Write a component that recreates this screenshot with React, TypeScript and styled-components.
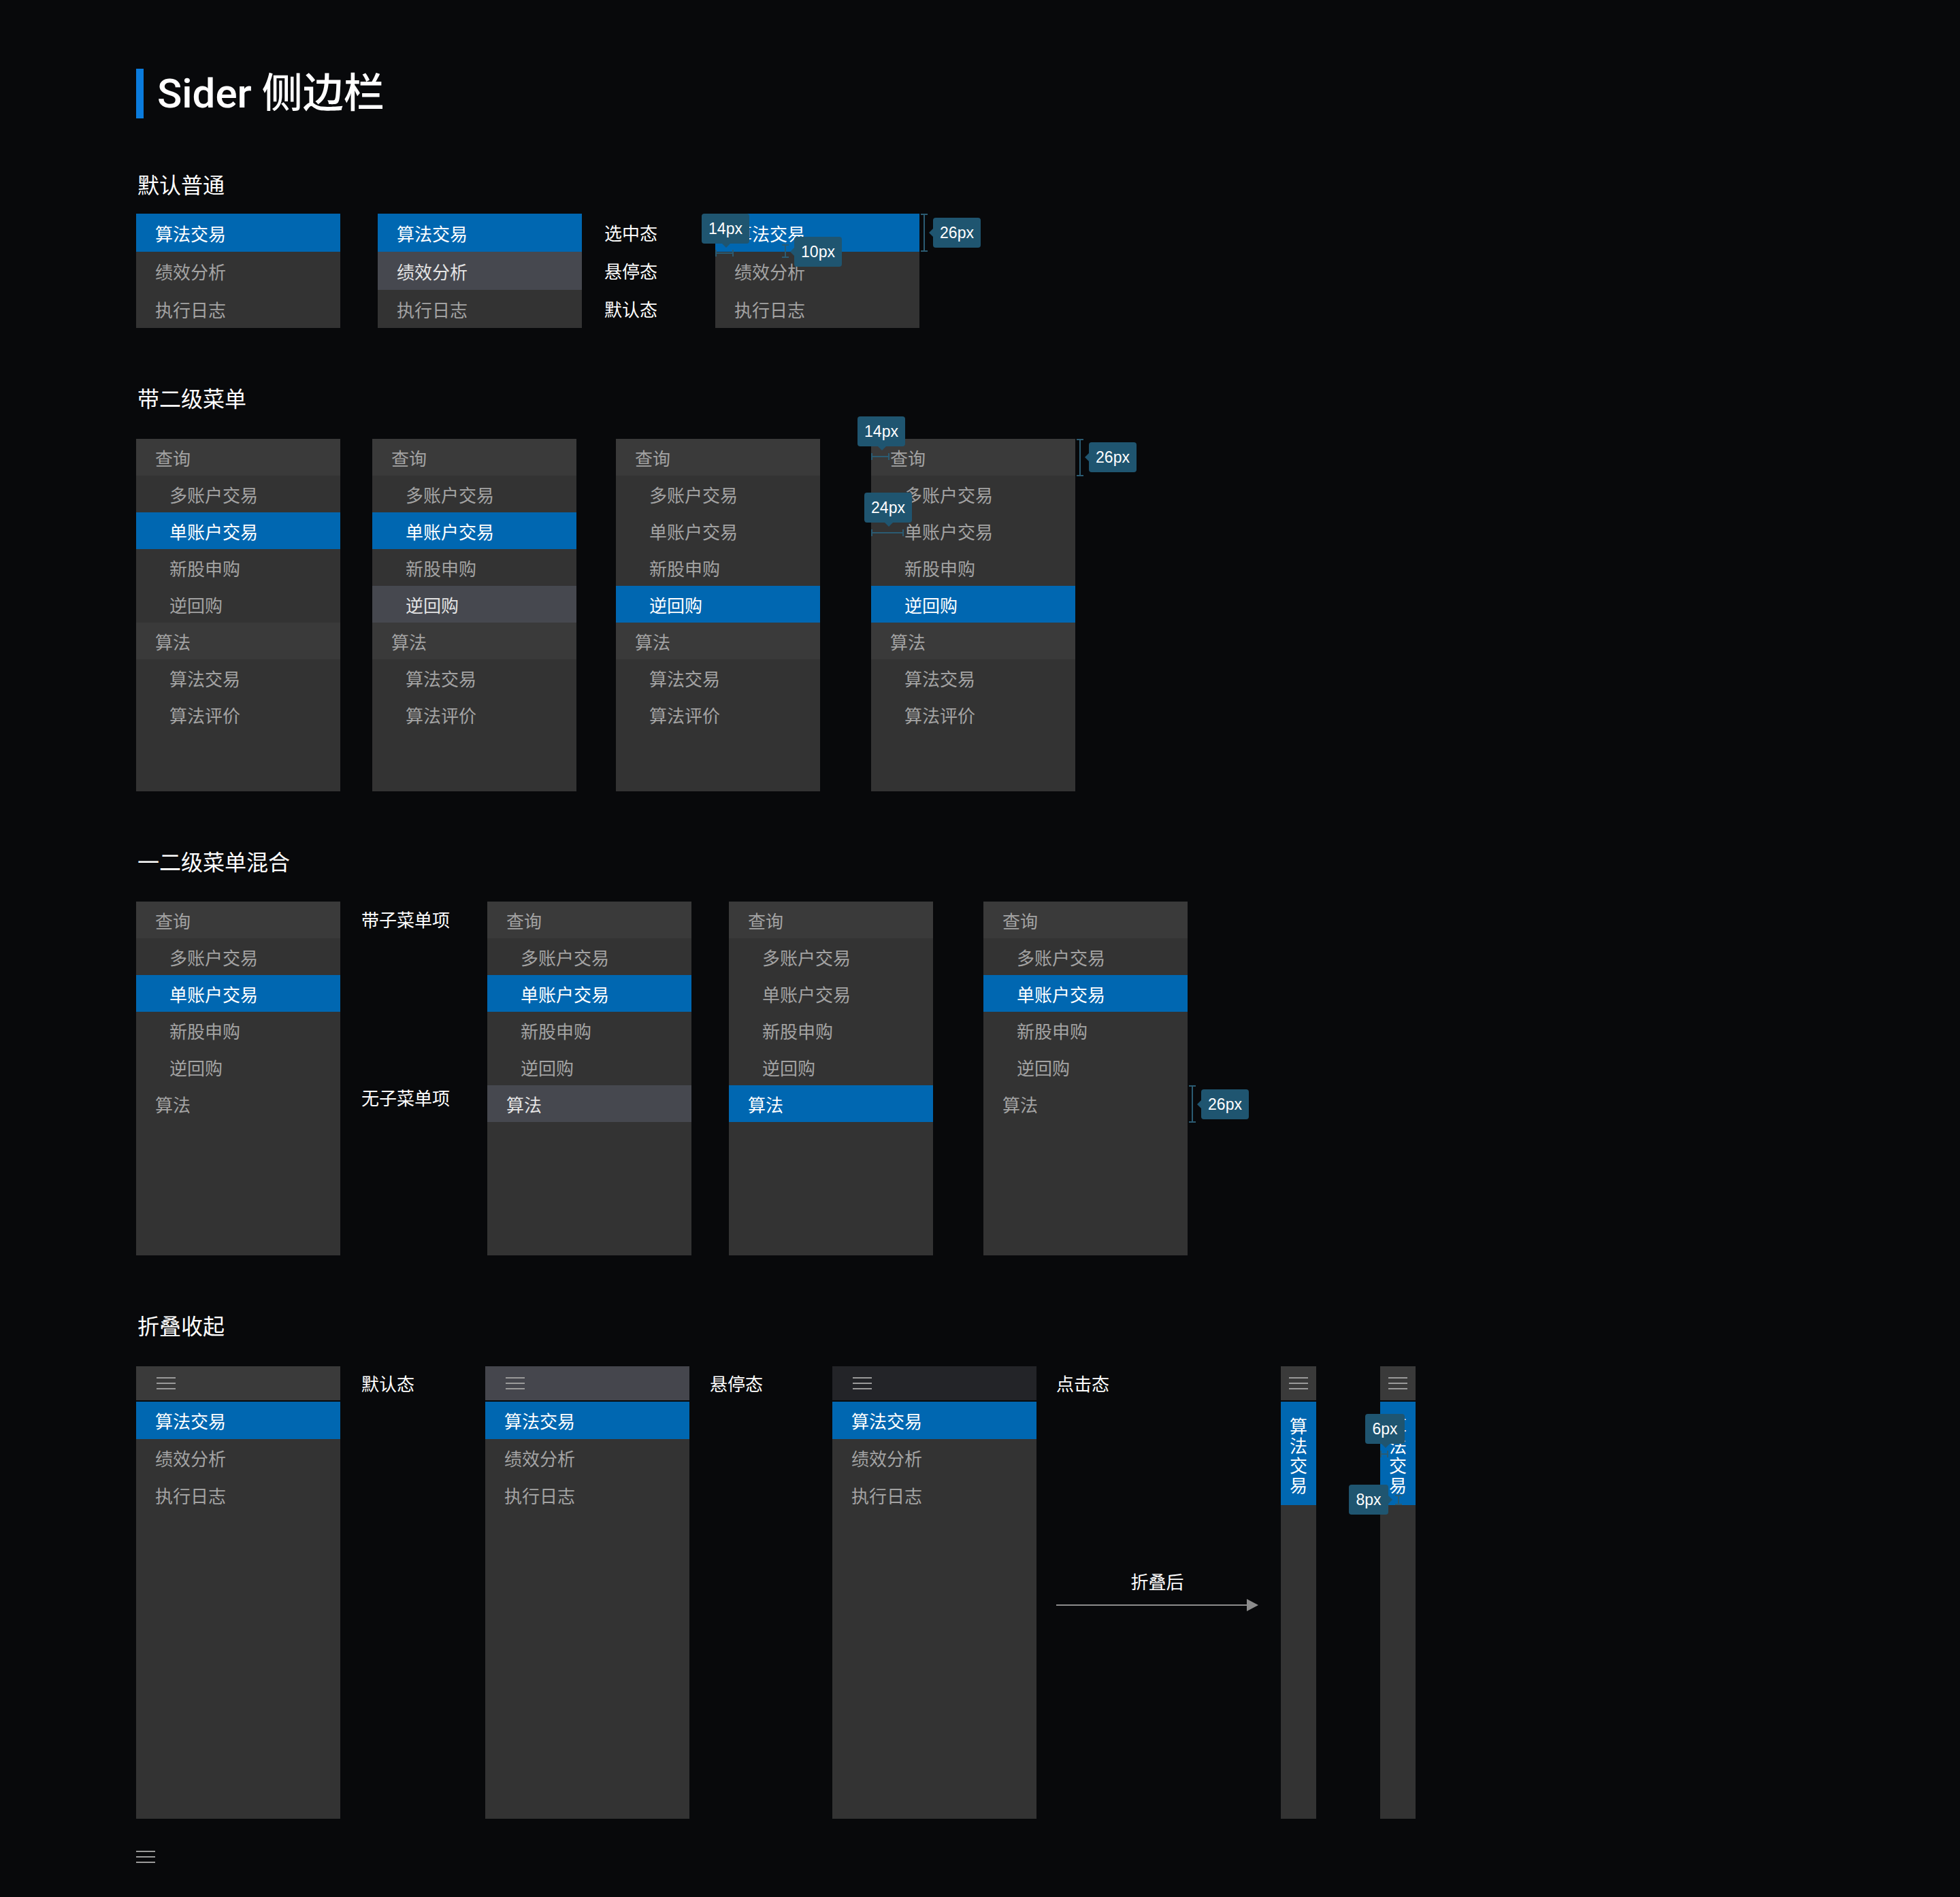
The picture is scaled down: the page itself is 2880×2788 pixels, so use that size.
import React from 'react';
import styled, { createGlobalStyle, css } from 'styled-components';

const C = {
  page: '#08090b',
  body: '#333333',
  group: '#3a3a3a',
  hover: '#46484f',
  active: '#0067b1',
  press: '#232428',
  text: '#a3a3a3',
  tip: '#1f5570',
  line: '#2b5b72',
};

const GlobalStyle = createGlobalStyle`
  html, body {
    margin: 0;
    padding: 0;
    background: ${C.page};
  }
  body {
    font-family: "Noto Sans CJK SC", "Noto Sans", sans-serif;
  }
`;

const Page = styled.div`
  width: 2880px;
  min-height: 2788px;
  box-sizing: border-box;
  padding: 101px 0 0 200px;
  background: ${C.page};
  color: #fff;
`;

const TitleRow = styled.div`
  display: flex;
  align-items: center;
  gap: 20px;
  height: 73px;
`;

const TitleBar = styled.div`
  width: 11px;
  height: 73px;
  background: #0a7bdc;
`;

const Title = styled.h1`
  margin: 0;
  font-family: Roboto, "Noto Sans CJK SC", sans-serif;
  font-size: 60px;
  line-height: 73px;
  font-weight: 500;
`;

const Section = styled.section<{ $top: number }>`
  margin-top: ${p => p.$top}px;
`;

const SectionTitle = styled.h2<{ $gap: number }>`
  margin: 0 0 ${p => p.$gap}px;
  padding-left: 2px;
  font-size: 32px;
  line-height: 44px;
  font-weight: 400;
`;

const Row = styled.div`
  display: flex;
  align-items: flex-start;
`;

const Sider = styled.div<{ $h: number; $ml?: number; $w?: number }>`
  position: relative;
  flex-shrink: 0;
  width: ${p => p.$w ?? 300}px;
  height: ${p => p.$h}px;
  margin-left: ${p => p.$ml ?? 0}px;
  background: ${C.body};
`;

type ItemState = 'default' | 'hover' | 'active';

const itemBg = (state: ItemState, group: boolean) => {
  if (state === 'active') return C.active;
  if (state === 'hover') return C.hover;
  return group ? C.group : 'transparent';
};

const itemColor = (state: ItemState) => {
  if (state === 'active') return '#ffffff';
  if (state === 'hover') return '#e4e4e4';
  return C.text;
};

const Item = styled.div<{ $h: number; $indent: number; $state: ItemState; $group: boolean }>`
  display: flex;
  align-items: center;
  height: ${p => p.$h}px;
  padding-left: ${p => p.$indent}px;
  font-size: 26px;
  white-space: nowrap;
  color: ${p => itemColor(p.$state)};
  background: ${p => itemBg(p.$state, p.$group)};
`;

const Header = styled.div<{ $state: 'default' | 'hover' | 'press'; $center?: boolean }>`
  display: flex;
  align-items: center;
  height: 50px;
  padding-left: 30px;
  border-bottom: 2px solid ${C.page};
  background: ${p => (p.$state === 'hover' ? '#45464d' : p.$state === 'press' ? C.press : C.group)};
  ${p =>
    p.$center &&
    css`
      justify-content: center;
      padding-left: 0;
    `}
`;

const VerticalActive = styled.div`
  display: flex;
  flex-direction: column;
  align-items: center;
  padding: 20px 0 16px;
  background: ${C.active};
  color: #fff;
  font-size: 26px;
  line-height: 29px;
`;

const LabelCol = styled.div<{ $w: number; $ml: number }>`
  display: flex;
  flex-direction: column;
  flex-shrink: 0;
  width: ${p => p.$w}px;
  margin-left: ${p => p.$ml}px;
`;

const StateLabel = styled.div<{ $lh: number; $mt?: number }>`
  margin-top: ${p => p.$mt ?? 0}px;
  font-size: 26px;
  line-height: ${p => p.$lh}px;
  font-weight: 400;
  white-space: nowrap;
`;

const ArrowBlock = styled.div`
  display: flex;
  flex-direction: column;
  align-items: center;
  gap: 8px;
  margin-top: 248px;
  font-size: 26px;
  line-height: 36px;
`;

const Footer = styled.div`
  margin-top: 46px;
  padding-bottom: 40px;
`;

type TipDir = 'down' | 'left' | 'right';

const Tip = styled.div<{ $x: number; $y: number; $w?: number; $dir: TipDir; $ax?: number }>`
  position: absolute;
  z-index: 3;
  left: ${p => p.$x}px;
  top: ${p => p.$y}px;
  width: ${p => p.$w ?? 70}px;
  height: 44px;
  border-radius: 4px;
  background: ${C.tip};
  color: #fff;
  font-family: "Liberation Sans", Arial, sans-serif;
  font-size: 23px;
  line-height: 44px;
  text-align: center;
  &::after {
    content: '';
    position: absolute;
    border: 6px solid transparent;
    ${p =>
      p.$dir === 'down'
        ? css`
            top: 100%;
            left: ${(p.$ax ?? 35) - 6}px;
            border-top-color: ${C.tip};
          `
        : p.$dir === 'left'
        ? css`
            right: 100%;
            top: 16px;
            border-right-color: ${C.tip};
          `
        : css`
            left: 100%;
            top: 16px;
            border-left-color: ${C.tip};
          `}
  }
`;

const HMeasure = styled.div<{ $x: number; $y: number; $len: number }>`
  position: absolute;
  z-index: 2;
  left: ${p => p.$x}px;
  top: ${p => p.$y - 1}px;
  width: ${p => p.$len}px;
  height: 2px;
  background: ${C.line};
  &::before,
  &::after {
    content: '';
    position: absolute;
    top: -4px;
    width: 2px;
    height: 10px;
    background: ${C.line};
  }
  &::before {
    left: 0;
  }
  &::after {
    right: 0;
  }
`;

const VMeasure = styled.div<{ $x: number; $y: number; $len: number }>`
  position: absolute;
  z-index: 2;
  left: ${p => p.$x - 1}px;
  top: ${p => p.$y}px;
  width: 2px;
  height: ${p => p.$len}px;
  background: ${C.line};
  &::before,
  &::after {
    content: '';
    position: absolute;
    left: -4px;
    width: 10px;
    height: 2px;
    background: ${C.line};
  }
  &::before {
    top: 0;
  }
  &::after {
    bottom: 0;
  }
`;

const Hamburger: React.FC = () => (
  <svg width="28" height="18" viewBox="0 0 28 18">
    <g stroke="#9a9a9a" strokeWidth="2">
      <line x1="0" y1="1" x2="28" y2="1" />
      <line x1="0" y1="9" x2="28" y2="9" />
      <line x1="0" y1="17" x2="28" y2="17" />
    </g>
  </svg>
);

const Arrow: React.FC = () => (
  <svg width="297" height="18" viewBox="0 0 297 18">
    <line x1="0" y1="9" x2="282" y2="9" stroke="#8c8c8c" strokeWidth="2" />
    <polygon points="280,0 297,9 280,18" fill="#8c8c8c" />
  </svg>
);

type MenuEntry = { label: string; level?: 1 | 2; state?: ItemState; group?: boolean };

const MenuList: React.FC<{ items: MenuEntry[]; rowH: number }> = ({ items, rowH }) => (
  <>
    {items.map((it, i) => (
      <Item
        key={i}
        $h={rowH}
        $indent={it.level === 2 ? 49 : 28}
        $state={it.state ?? 'default'}
        $group={!!it.group}
      >
        {it.label}
      </Item>
    ))}
  </>
);

const simple = (sel: number, hover = -1): MenuEntry[] =>
  ['算法交易', '绩效分析', '执行日志'].map((label, i) => ({
    label,
    state: i === sel ? 'active' : i === hover ? 'hover' : 'default',
  }));

const nested = (sel: number, hover = -1): MenuEntry[] => {
  const rows: MenuEntry[] = [
    { label: '查询', group: true },
    { label: '多账户交易', level: 2 },
    { label: '单账户交易', level: 2 },
    { label: '新股申购', level: 2 },
    { label: '逆回购', level: 2 },
    { label: '算法', group: true },
    { label: '算法交易', level: 2 },
    { label: '算法评价', level: 2 },
  ];
  return rows.map((r, i) => ({ ...r, state: i === sel ? 'active' : i === hover ? 'hover' : 'default' }));
};

const mixed = (sel: number[], hover = -1): MenuEntry[] => {
  const rows: MenuEntry[] = [
    { label: '查询', group: true },
    { label: '多账户交易', level: 2 },
    { label: '单账户交易', level: 2 },
    { label: '新股申购', level: 2 },
    { label: '逆回购', level: 2 },
    { label: '算法' },
  ];
  return rows.map((r, i) => ({
    ...r,
    state: sel.includes(i) ? 'active' : i === hover ? 'hover' : 'default',
  }));
};

const Collapsible: React.FC<{ ml: number; header: 'default' | 'hover' | 'press' }> = ({ ml, header }) => (
  <Sider $h={665} $ml={ml}>
    <Header $state={header}>
      <Hamburger />
    </Header>
    <MenuList items={simple(0)} rowH={55} />
  </Sider>
);

const Collapsed: React.FC<{ ml: number; children?: React.ReactNode }> = ({ ml, children }) => (
  <Sider $h={665} $w={52} $ml={ml}>
    <Header $state="default" $center>
      <Hamburger />
    </Header>
    <VerticalActive>
      {'算法交易'.split('').map(ch => (
        <span key={ch}>{ch}</span>
      ))}
    </VerticalActive>
    {children}
  </Sider>
);

const App: React.FC = () => (
  <Page>
    <GlobalStyle />
    <TitleRow>
      <TitleBar />
      <Title>Sider 侧边栏</Title>
    </TitleRow>

    <Section $top={74}>
      <SectionTitle $gap={22}>默认普通</SectionTitle>
      <Row>
        <Sider $h={168}>
          <MenuList items={simple(0)} rowH={56} />
        </Sider>
        <Sider $h={168} $ml={55}>
          <MenuList items={simple(0, 1)} rowH={56} />
        </Sider>
        <LabelCol $w={80} $ml={33}>
          <StateLabel $lh={56}>选中态</StateLabel>
          <StateLabel $lh={56}>悬停态</StateLabel>
          <StateLabel $lh={56}>默认态</StateLabel>
        </LabelCol>
        <Sider $h={168} $ml={83}>
          <MenuList items={simple(0)} rowH={56} />
          <Tip $x={-20} $y={0} $dir="down" $ax={36}>14px</Tip>
          <HMeasure $x={0} $y={58} $len={27} />
          <Tip $x={116} $y={34} $dir="left">10px</Tip>
          <VMeasure $x={103} $y={45} $len={20} />
          <VMeasure $x={307} $y={0} $len={56} />
          <Tip $x={320} $y={6} $dir="left">26px</Tip>
        </Sider>
      </Row>
    </Section>

    <Section $top={80}>
      <SectionTitle $gap={39}>带二级菜单</SectionTitle>
      <Row>
        <Sider $h={518}>
          <MenuList items={nested(2)} rowH={54} />
        </Sider>
        <Sider $h={518} $ml={47}>
          <MenuList items={nested(2, 4)} rowH={54} />
        </Sider>
        <Sider $h={518} $ml={58}>
          <MenuList items={nested(4)} rowH={54} />
        </Sider>
        <Sider $h={518} $ml={75}>
          <MenuList items={nested(4)} rowH={54} />
          <Tip $x={-20} $y={-33} $dir="down" $ax={36}>14px</Tip>
          <HMeasure $x={0} $y={26} $len={27} />
          <Tip $x={-10} $y={79} $dir="down" $ax={36}>24px</Tip>
          <HMeasure $x={0} $y={138} $len={48} />
          <VMeasure $x={307} $y={0} $len={55} />
          <Tip $x={320} $y={5} $dir="left">26px</Tip>
        </Sider>
      </Row>
    </Section>

    <Section $top={80}>
      <SectionTitle $gap={38}>一二级菜单混合</SectionTitle>
      <Row>
        <Sider $h={520}>
          <MenuList items={mixed([2])} rowH={54} />
        </Sider>
        <LabelCol $w={130} $ml={31}>
          <StateLabel $lh={52}>带子菜单项</StateLabel>
          <StateLabel $lh={52} $mt={210}>无子菜单项</StateLabel>
        </LabelCol>
        <Sider $h={520} $ml={55}>
          <MenuList items={mixed([2], 5)} rowH={54} />
        </Sider>
        <Sider $h={520} $ml={55}>
          <MenuList items={mixed([5])} rowH={54} />
        </Sider>
        <Sider $h={520} $ml={74}>
          <MenuList items={mixed([2])} rowH={54} />
          <VMeasure $x={307} $y={270} $len={55} />
          <Tip $x={320} $y={276} $dir="left">26px</Tip>
        </Sider>
      </Row>
    </Section>

    <Section $top={80}>
      <SectionTitle $gap={39}>折叠收起</SectionTitle>
      <Row>
        <Collapsible ml={0} header="default" />
        <LabelCol $w={182} $ml={31}>
          <StateLabel $lh={50}>默认态</StateLabel>
        </LabelCol>
        <Collapsible ml={0} header="hover" />
        <LabelCol $w={180} $ml={30}>
          <StateLabel $lh={50}>悬停态</StateLabel>
        </LabelCol>
        <Collapsible ml={0} header="press" />
        <LabelCol $w={297} $ml={29}>
          <StateLabel $lh={50}>点击态</StateLabel>
          <ArrowBlock>
            <span>折叠后</span>
            <Arrow />
          </ArrowBlock>
        </LabelCol>
        <Collapsed ml={33} />
        <Collapsed ml={94}>
          <Tip $x={-22} $y={70} $w={58} $dir="down" $ax={30}>6px</Tip>
          <HMeasure $x={0} $y={129} $len={12} />
          <Tip $x={-46} $y={174} $w={58} $dir="right">8px</Tip>
          <VMeasure $x={27} $y={189} $len={15} />
        </Collapsed>
      </Row>
    </Section>

    <Footer>
      <Hamburger />
    </Footer>
  </Page>
);

export default App;
